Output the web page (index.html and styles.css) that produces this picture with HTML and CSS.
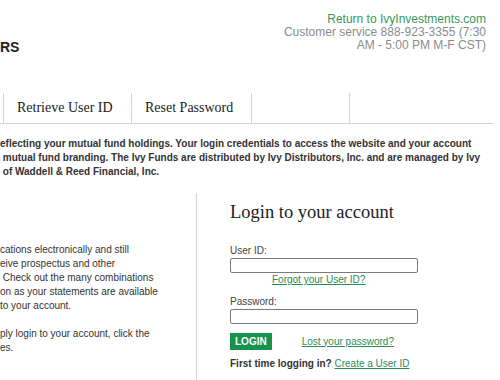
FILE: index.html
```html
<!DOCTYPE html>
<html lang="en">
<head>
<meta charset="utf-8">
<title>Login to your account</title>
<link rel="stylesheet" href="styles.css">
</head>
<body>
<header class="top">
  <div class="brand">RS</div>
  <div class="contact">
    <a class="home-link" href="#">Return to IvyInvestments.com</a>
    <p class="hours">Customer service 888-923-3355 (7:30<br>AM - 5:00 PM M-F CST)</p>
  </div>
</header>
<nav class="tabs">
  <span class="tab tab-edge"></span>
  <a class="tab tab-user" href="#">Retrieve User ID</a>
  <a class="tab tab-pass" href="#">Reset Password</a>
  <span class="tab tab-empty"></span>
</nav>
<p class="intro">eflecting your mutual fund holdings. Your login credentials to access the website and your account<br>&nbsp;mutual fund branding. The Ivy Funds are distributed by Ivy Distributors, Inc. and are managed by Ivy<br>&nbsp;of Waddell &amp; Reed Financial, Inc.</p>
<main class="columns">
  <section class="info">
    <p>cations electronically and still<br>eive prospectus and other<br>&nbsp;Check out the many combinations<br>on as your statements are available<br>to your account.</p>
    <p>ply login to your account, click the<br>es.</p>
  </section>
  <section class="login">
    <h1 class="login-title">Login to your account</h1>
    <form class="login-form">
      <label class="field-label" for="uid">User ID:</label>
      <input class="field" id="uid" type="text">
      <a class="forgot" href="#">Forgot your User ID?</a>
      <label class="field-label pw-label" for="pw">Password:</label>
      <input class="field" id="pw" type="password">
      <div class="actions">
        <button class="login-btn" type="button">LOGIN</button>
        <a class="lost" href="#">Lost your password?</a>
      </div>
      <p class="first-time">First time logging in? <a href="#">Create a User ID</a></p>
    </form>
  </section>
</main>
</body>
</html>
```
FILE: styles.css
```css
html, body {
  margin: 0;
  padding: 0;
  background: #fff;
}
body {
  width: 500px;
  height: 380px;
  overflow: hidden;
  font-family: "Liberation Sans", Arial, sans-serif;
  color: #333;
}
a { color: #2b8a57; }

.top {
  display: flex;
  justify-content: space-between;
  height: 93px;
  box-sizing: border-box;
  padding: 13px 14px 0 0;
}
.brand {
  font-weight: bold;
  font-size: 14px;
  color: #222;
  margin-top: 26px;
}
.contact {
  text-align: right;
  font-size: 12px;
  line-height: 13px;
}
.home-link {
  color: #3a9660;
  text-decoration: none;
}
.hours {
  margin: 0;
  color: #8c8c8c;
}

.tabs {
  display: flex;
  width: 493px;
  height: 30px;
  border-bottom: 1px solid #d4d4d4;
}
.tab {
  display: flex;
  align-items: center;
  box-sizing: border-box;
  border-right: 1px solid #d4d4d4;
  padding-left: 13px;
  font-family: "Liberation Serif", "Times New Roman", serif;
  font-size: 14px;
  color: #222;
  text-decoration: none;
}
.tab-edge { width: 4px; padding: 0; }
.tab-user { width: 128px; }
.tab-pass { width: 120px; }
.tab-empty { width: 98px; }

.intro {
  margin: 13px 0 0;
  font-size: 10px;
  line-height: 14px;
  font-weight: bold;
  white-space: nowrap;
  color: #333;
}

.columns {
  display: flex;
  margin-top: 14px;
}
.info {
  width: 197px;
  height: 190px;
  border-right: 1px solid #d4d4d4;
  padding-top: 50px;
  box-sizing: border-box;
  flex-shrink: 0;
  font-size: 10px;
  line-height: 14px;
  white-space: nowrap;
}
.info p { margin: 0 0 14px; }

.login {
  padding: 8px 0 0 33px;
}
.login-title {
  margin: 0;
  font-family: "Liberation Serif", "Times New Roman", serif;
  font-weight: normal;
  font-size: 18.5px;
  line-height: 22px;
  color: #222;
}
.login-form {
  margin-top: 21px;
  display: flex;
  flex-direction: column;
  align-items: flex-start;
  font-size: 10px;
  line-height: 14px;
}
.field-label { color: #444; }
.pw-label { margin-top: 8px; }
.field {
  width: 188px;
  height: 15px;
  box-sizing: border-box;
  margin: 0;
  border: 1px solid #7a7a7a;
  border-radius: 2px;
  padding: 0 3px;
  background: #fff;
}
.forgot {
  margin-left: 42px;
}
.actions {
  display: flex;
  align-items: center;
  gap: 30px;
  margin-top: 9px;
}
.login-btn {
  height: 17px;
  padding: 0 5px;
  border: 0;
  background: #17924f;
  color: #fff;
  font-family: "Liberation Sans", Arial, sans-serif;
  font-weight: bold;
  font-size: 10px;
  line-height: 17px;
}
.first-time {
  margin: 7px 0 0;
  font-weight: bold;
  color: #333;
}
.first-time a { font-weight: normal; }
```
